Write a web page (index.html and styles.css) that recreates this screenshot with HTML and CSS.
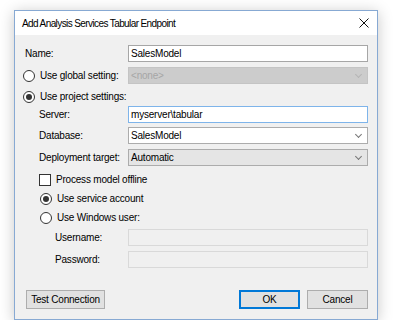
FILE: index.html
```html
<!DOCTYPE html>
<html lang="en">
<head>
    <meta charset="UTF-8">
    <title>Add Analysis Services Tabular Endpoint</title>
    <link rel="stylesheet" href="styles.css">
</head>
<body>
    <div class="dialog">
        <div class="titlebar">
            <span class="title">Add Analysis Services Tabular Endpoint</span>
            <svg class="close" width="10" height="10" viewBox="0 0 10 10">
                <path d="M0.5 0.5 L9.5 9.5 M9.5 0.5 L0.5 9.5" stroke="#111" stroke-width="1" fill="none"/>
            </svg>
        </div>
        <div class="content">
            <div class="row">
                <label class="label">Name:</label>
                <div class="textbox">SalesModel</div>
            </div>
            <div class="row gap-4">
                <div class="label radio-label outdent">
                    <span class="radio"></span>Use global setting:
                </div>
                <div class="combo disabled-combo">&lt;none&gt;<span class="chevron"></span></div>
            </div>
            <div class="row gap-1">
                <div class="label radio-label outdent">
                    <span class="radio checked"></span>Use project settings:
                </div>
            </div>
            <div class="row gap-4">
                <label class="label indent1">Server:</label>
                <div class="textbox focused">myserver\tabular</div>
            </div>
            <div class="row">
                <label class="label indent1">Database:</label>
                <div class="combo">SalesModel<span class="chevron"></span></div>
            </div>
            <div class="row">
                <label class="label indent1">Deployment target:</label>
                <div class="combo readonly-combo">Automatic<span class="chevron"></span></div>
            </div>
            <div class="row gap-2">
                <div class="label radio-label indent1">
                    <span class="checkbox"></span>Process model offline
                </div>
            </div>
            <div class="row gap-2">
                <div class="label radio-label indent1 nudge">
                    <span class="radio checked"></span>Use service account
                </div>
            </div>
            <div class="row gap-3">
                <div class="label radio-label indent1 nudge">
                    <span class="radio"></span>Use Windows user:
                </div>
            </div>
            <div class="row">
                <label class="label indent2">Username:</label>
                <div class="textbox disabled"></div>
            </div>
            <div class="row gap-22">
                <label class="label indent2">Password:</label>
                <div class="textbox disabled"></div>
            </div>
            <div class="buttons">
                <button class="button wide">Test Connection</button>
                <div class="spacer"></div>
                <button class="button default">OK</button>
                <button class="button">Cancel</button>
            </div>
        </div>
    </div>
</body>
</html>
```

FILE: styles.css
```css
body {
    margin: 0;
    padding: 10px 0 0 14px;
    background: #ffffff;
    font-family: 'Liberation Sans', Arial, sans-serif;
    font-size: 10px;
    letter-spacing: -0.2px;
    color: #000;
}

.dialog {
    width: 362px;
    height: 308px;
    border: 1px solid #87a9d3;
    background: #f0f0f0;
    box-shadow: 0 2px 14px rgba(0, 0, 0, 0.22);
}

.titlebar {
    height: 24px;
    background: #fff;
    display: flex;
    align-items: center;
    padding: 0 7px 0 7px;
}

.title {
    flex: 1;
    font-size: 10px;
    letter-spacing: -0.6px;
    padding-top: 1px;
}

.close {
    margin-right: 1px;
}

.content {
    padding: 10px 9px 10px 10px;
}

.row {
    display: flex;
    align-items: center;
    height: 17px;
    margin-bottom: 5px;
}

.gap-1 { margin-bottom: 1px; }
.gap-2 { margin-bottom: 2px; }
.gap-3 { margin-bottom: 3px; }
.gap-4 { margin-bottom: 4px; }
.gap-22 { margin-bottom: 22px; }

.label {
    flex: 1;
    white-space: nowrap;
}

.radio-label {
    display: flex;
    align-items: center;
}

.outdent { margin-left: -2px; }
.indent1 { padding-left: 14px; }
.indent1.nudge { padding-left: 15px; }
.indent2 { padding-left: 30px; }

.radio {
    width: 10px;
    height: 10px;
    border: 1px solid #333;
    border-radius: 50%;
    background: #fff;
    margin-right: 5px;
    display: flex;
    align-items: center;
    justify-content: center;
}

.radio.checked::after {
    content: '';
    width: 6px;
    height: 6px;
    border-radius: 50%;
    background: #333;
}

.checkbox {
    width: 10px;
    height: 10px;
    border: 1px solid #333;
    background: #fff;
    margin-right: 5px;
}

.textbox,
.combo {
    width: 240px;
    height: 17px;
    border: 1px solid #a6a6a6;
    background: #fff;
    display: flex;
    align-items: center;
    padding-left: 2px;
    box-sizing: border-box;
    position: relative;
}

.textbox.focused {
    border-color: #7eb4ea;
}

.textbox.disabled {
    background: #f0f0f0;
    border-color: #d9d9d9;
}

.combo {
    border-color: #acacac;
}

.disabled-combo {
    background: #cccccc;
    border-color: #c4c4c4;
    color: #a6a6a6;
}

.readonly-combo {
    background: #e5e5e5;
}

.chevron {
    position: absolute;
    right: 6px;
    top: 4px;
    width: 4px;
    height: 4px;
    border-right: 1px solid #777;
    border-bottom: 1px solid #777;
    transform: rotate(45deg);
}

.disabled-combo .chevron {
    border-color: #b5b5b5;
}

.buttons {
    display: flex;
    height: 19px;
    gap: 7px;
    padding-left: 1px;
}

.spacer {
    flex: 1;
}

.button {
    font-family: inherit;
    font-size: 10px;
    letter-spacing: -0.2px;
    white-space: nowrap;
    width: 61px;
    height: 19px;
    padding: 0;
    background: #e1e1e1;
    border: 1px solid #adadad;
    color: #000;
}

.button.wide {
    width: 79px;
}

.button.default {
    border-color: #0078d7;
    box-shadow: inset 0 0 0 1px #0078d7;
}
```
